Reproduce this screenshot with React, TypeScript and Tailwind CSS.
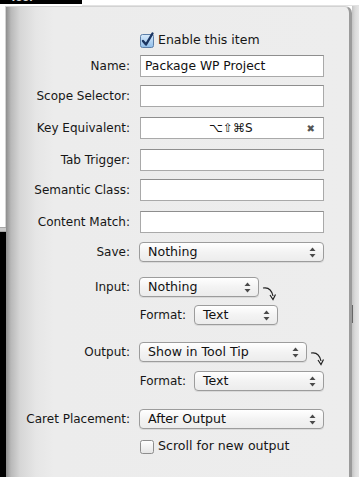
import React from "react";

function Check({ checked }: { checked?: boolean }) {
  return (
    <svg width="15" height="15" viewBox="0 0 15 15" className="shrink-0 overflow-visible">
      <defs>
        <linearGradient id={checked ? "cbOn" : "cbOff"} x1="0" y1="0" x2="0" y2="1">
          <stop offset="0" stopColor={checked ? "#d9ebfb" : "#ffffff"} />
          <stop offset="1" stopColor={checked ? "#8fbde9" : "#e4e4e4"} />
        </linearGradient>
      </defs>
      <rect x="0.5" y="1.5" width="13" height="13" rx="2" fill={`url(#${checked ? "cbOn" : "cbOff"})`} stroke={checked ? "#5d7fa8" : "#8d8d8d"} />
      {checked && (
        <path d="M3 8 L6 11.5 L12.5 0.5" fill="none" stroke="#1b3561" strokeWidth="2.4" strokeLinecap="round" strokeLinejoin="round" />
      )}
    </svg>
  );
}

function UpDown() {
  return (
    <svg width="7" height="11" viewBox="0 0 7 11" className="shrink-0">
      <path d="M3.5 0.5 L6.5 4 L0.5 4 Z" fill="#4a4a4a" />
      <path d="M3.5 10.5 L6.5 7 L0.5 7 Z" fill="#4a4a4a" />
    </svg>
  );
}

function CurveArrow() {
  return (
    <svg width="16" height="16" viewBox="0 0 16 16" className="shrink-0 self-start mt-[9px] ml-[3px] overflow-visible">
      <path d="M1 2 Q9 0.5 11 10" fill="none" stroke="#222" strokeWidth="1.2" />
      <path d="M8 9 L11 13.5 L13.5 8.5" fill="none" stroke="#222" strokeWidth="1.2" />
    </svg>
  );
}

function Label({ children }: { children: React.ReactNode }) {
  return <div className="w-[125px] shrink-0 text-right pr-[1px] text-[12px] text-[#161616]">{children}</div>;
}

function TextField({ value }: { value?: string }) {
  return (
    <div className="ml-[9px] w-[184px] h-[22px] bg-white border border-[#a9a9a9] border-t-[#8e8e8e] flex items-center px-[4px] text-[12.3px] text-[#111]">
      {value}
    </div>
  );
}

function Popup({ value, w }: { value: string; w: string }) {
  return (
    <div
      className={`${w} h-[20px] rounded-[4px] border border-[#9c9c9c] bg-[linear-gradient(to_bottom,#ffffff,#f3f3f3_50%,#ececec)] shadow-[0_1px_0_rgba(0,0,0,0.08)] flex items-center justify-between pl-[8px] pr-[7px] text-[12.6px] text-[#111]`}
    >
      <span>{value}</span>
      <UpDown />
    </div>
  );
}

export default function App() {
  return (
    <div className="w-[359px] h-[477px] overflow-hidden flex flex-col bg-white font-['DejaVu_Sans',sans-serif]">
      {/* background window top, its title clipped by the panel */}
      <div className="h-[6px] shrink-0 flex">
        <div className="w-[82px] h-[4px] bg-black overflow-hidden pl-[10px]">
          <div className="text-[10px] font-bold text-[#dcdcdc] leading-[10px] -mt-[7px]">Tool</div>
        </div>
        <div className="flex-1 border-b border-[#e2e2e2]" />
      </div>

      <div className="flex-1 flex">
        {/* left edge of back window */}
        <div className="w-[6px] shrink-0 flex flex-col">
          <div className="h-[221px] bg-white border-r border-[#d4d4d4]" />
          <div className="h-[5px] bg-[#c8c8c8] border-y border-[#a7a7a7]" />
          <div className="flex-1 bg-black" />
        </div>

        {/* panel */}
        <div className="w-[346px] shrink-0 rounded-tr-[7px] border-t border-r-[3px] border-t-[#d2d2d2] border-r-[#9b9b9b] bg-[linear-gradient(to_right,#8e8e8e_0px,#b9b9b9_5px,#d6d6d6_14px,#e6e6e6_30px,#ececec_48px,#ededed_100%)] text-[#161616]">
          <div className="pt-[26px] flex flex-col">
            <div className="h-[14px] flex items-center pl-[134px] gap-[3px] text-[12.5px]">
              <Check checked />
              <span>Enable this item</span>
            </div>

            <div className="mt-[8px] flex items-center">
              <Label>Name:</Label>
              <TextField value="Package WP Project" />
            </div>
            <div className="mt-[8px] flex items-center">
              <Label>Scope Selector:</Label>
              <TextField />
            </div>
            <div className="mt-[10px] flex items-center">
              <Label>Key Equivalent:</Label>
              <div className="ml-[9px] w-[184px] h-[22px] bg-white border border-[#a9a9a9] border-t-[#8e8e8e] flex items-center pl-[4px] pr-[8px] text-[12px] text-[#111]">
                <span className="flex-1 text-center pl-[10px]">⌥⇧⌘S</span>
                <span className="text-[10px] text-[#555] font-bold">✖</span>
              </div>
            </div>
            <div className="mt-[10px] flex items-center">
              <Label>Tab Trigger:</Label>
              <TextField />
            </div>
            <div className="mt-[8px] flex items-center">
              <Label>Semantic Class:</Label>
              <TextField />
            </div>
            <div className="mt-[10px] flex items-center">
              <Label>Content Match:</Label>
              <TextField />
            </div>

            <div className="mt-[9px] h-[20px] flex items-center">
              <Label>Save:</Label>
              <div className="ml-[8px]">
                <Popup value="Nothing" w="w-[185px]" />
              </div>
            </div>

            <div className="mt-[15px] h-[20px] flex items-center">
              <Label>Input:</Label>
              <div className="ml-[8px]">
                <Popup value="Nothing" w="w-[120px]" />
              </div>
              <CurveArrow />
            </div>
            <div className="mt-[8px] h-[20px] flex items-center">
              <div className="w-[180px] shrink-0 text-right text-[12px]">Format:</div>
              <div className="ml-[8px]">
                <Popup value="Text" w="w-[84px]" />
              </div>
            </div>

            <div className="mt-[17px] h-[20px] flex items-center">
              <Label>Output:</Label>
              <div className="ml-[8px]">
                <Popup value="Show in Tool Tip" w="w-[168px]" />
              </div>
              <CurveArrow />
            </div>
            <div className="mt-[9px] h-[20px] flex items-center">
              <div className="w-[180px] shrink-0 text-right text-[12px]">Format:</div>
              <div className="ml-[8px]">
                <Popup value="Text" w="w-[130px]" />
              </div>
            </div>

            <div className="mt-[18px] h-[20px] flex items-center">
              <Label>Caret Placement:</Label>
              <div className="ml-[8px]">
                <Popup value="After Output" w="w-[185px]" />
              </div>
            </div>

            <div className="mt-[10px] h-[14px] flex items-center pl-[134px] gap-[3px] text-[12.6px]">
              <Check />
              <span>Scroll for new output</span>
            </div>
          </div>
        </div>

        {/* right edge */}
        <div className="flex-1 bg-[linear-gradient(to_right,#c4c4c4_0px,#dadada_3px,#e6e6e6_7px)] flex flex-col">
          <div className="mt-[299px] w-[1px] h-[18px] bg-[#666]" />
        </div>
      </div>
    </div>
  );
}
